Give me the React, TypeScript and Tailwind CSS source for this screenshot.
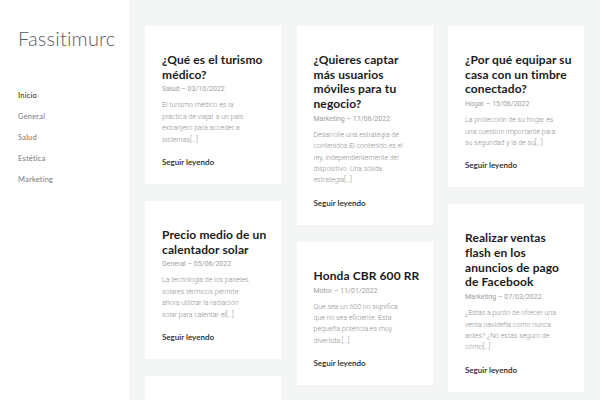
const nav = ['Inicio', 'General', 'Salud', 'Estética', 'Marketing'];

type Post = { title: string[]; meta: string; body: string[] };

const columns: Post[][] = [
  [
    {
      title: ['¿Qué es el turismo', 'médico?'],
      meta: 'Salud – 03/10/2022',
      body: ['El turismo médico es la', 'práctica de viajar a un país', 'extranjero para acceder a', 'sistemas[…]'],
    },
    {
      title: ['Precio medio de un', 'calentador solar'],
      meta: 'General – 05/06/2022',
      body: ['La tecnología de los paneles', 'solares térmicos permite', 'ahora utilizar la radiación', 'solar para calentar el[…]'],
    },
  ],
  [
    {
      title: ['¿Quieres captar', 'más usuarios', 'móviles para tu', 'negocio?'],
      meta: 'Marketing – 17/06/2022',
      body: ['Desarrolle una estrategia de', 'contenidos El contenido es el', 'rey, independientemente del', 'dispositivo. Una sólida', 'estrategia[…]'],
    },
    {
      title: ['Honda CBR 600 RR'],
      meta: 'Motor – 11/01/2022',
      body: ['Que sea un 600 no significa', 'que no sea eficiente. Esta', 'pequeña potencia es muy', 'divertida.[…]'],
    },
  ],
  [
    {
      title: ['¿Por qué equipar su', 'casa con un timbre', 'conectado?'],
      meta: 'Hogar – 15/06/2022',
      body: ['La protección de su hogar es', 'una cuestión importante para', 'su seguridad y la de su[…]'],
    },
    {
      title: ['Realizar ventas', 'flash en los', 'anuncios de pago', 'de Facebook'],
      meta: 'Marketing – 07/03/2022',
      body: ['¿Estás a punto de ofrecer una', 'venta navideña como nunca', 'antes? ¿No estás seguro de', 'cómo[…]'],
    },
  ],
];

function Card({ post }: { post: Post }) {
  return (
    <article className="bg-white px-[17px] pt-[27px] pb-[16px]">
      <h2 className="font-['Lato',sans-serif] text-[12px] font-bold leading-[14.7px] tracking-[0.1px] text-[#1b1b1b]">
        {post.title.map((l) => (
          <span key={l} className="block whitespace-nowrap">{l}</span>
        ))}
      </h2>
      <div className="mt-[2px] font-['Roboto',sans-serif] text-[7px] leading-[10px] text-[#a0a0a0]">{post.meta}</div>
      <p className="mt-[6px] font-['Roboto',sans-serif] text-[7px] font-light leading-[11.4px] text-[#8f8f8f]">
        {post.body.map((l) => (
          <span key={l} className="block whitespace-nowrap">{l}</span>
        ))}
      </p>
      <a className="mt-[10px] block font-['Lato',sans-serif] text-[8px] font-semibold leading-[12px] text-[#222]">
        Seguir leyendo
      </a>
    </article>
  );
}

export default function App() {
  return (
    <div className="flex h-[400px] w-[600px] overflow-hidden bg-[#f4f5f5]">
      {/* Sidebar */}
      <aside className="w-[129px] shrink-0 bg-white pl-[18px] pt-[26px]">
        <div className="font-['Lato',sans-serif] text-[20px] font-light leading-[24px] tracking-[0.2px] text-[#5a5a5a]">
          Fassitimurc
        </div>
        <ul className="mt-[35px] flex flex-col">
          {nav.map((item, i) => (
            <li
              key={item}
              className={`font-['Lato',sans-serif] text-[7.5px] leading-[21px] tracking-[0.2px] ${
                i === 0 ? 'text-[#222]' : 'text-[#777]'
              }`}
            >
              {item}
            </li>
          ))}
        </ul>
      </aside>

      {/* Posts */}
      <main className="grid flex-1 grid-cols-3 items-start gap-x-[15.5px] px-4 pt-[26px]">
        {columns.map((col, i) => (
          <div key={i} className="flex min-w-0 flex-col gap-[17px]">
            {col.map((p) => (
              <Card key={p.meta} post={p} />
            ))}
            {i < 2 && <div className="h-[60px] bg-white" />}
          </div>
        ))}
      </main>
    </div>
  );
}
